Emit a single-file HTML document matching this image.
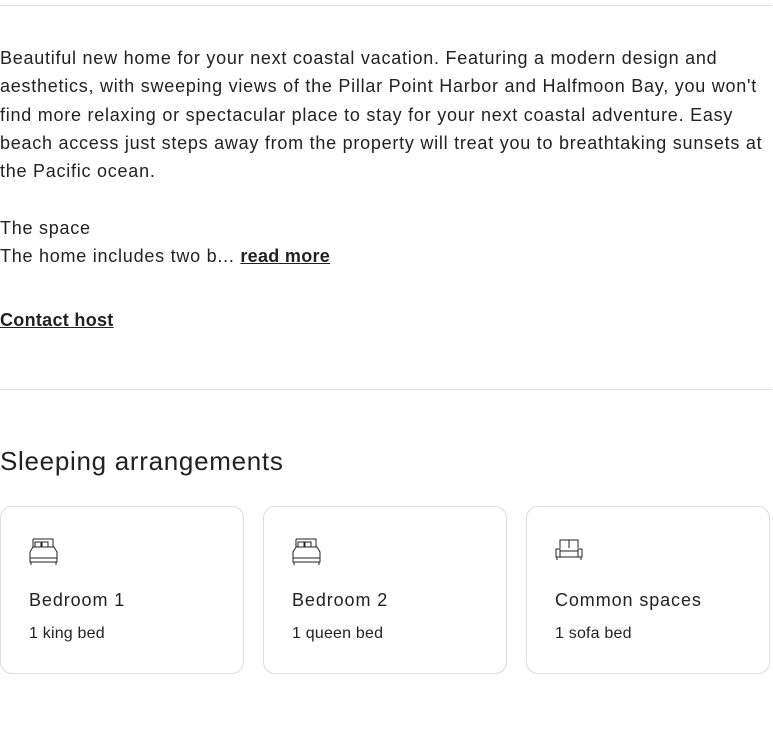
<!DOCTYPE html><html><head><style>
body{margin:0;width:773px;height:729px;background:#fff;font-family:"Liberation Sans",sans-serif;color:#222;position:relative;overflow:hidden}
.hr{position:absolute;left:0;width:771px;height:1px;background:#ddd}
.p{position:absolute;left:0;width:775px;font-size:18px;line-height:28.3px;letter-spacing:0.75px}
a{color:#222;text-decoration:underline;font-weight:bold;letter-spacing:0.3px}
.card{position:absolute;top:506px;width:244px;height:168px;border:1px solid #ddd;border-radius:12px;box-sizing:border-box}
.card svg{position:absolute;left:28px;top:30px}
.t{position:absolute;left:28px;top:83px;font-size:18px;letter-spacing:0.9px}
.s{position:absolute;left:28px;top:118px;font-size:16px;letter-spacing:0.2px}
</style></head><body>
<div class="hr" style="top:5px"></div>
<div class="p" style="top:44px">Beautiful new home for your next coastal vacation. Featuring a modern design and aesthetics, with sweeping views of the Pillar Point Harbor and Halfmoon Bay, you won't find more relaxing or spectacular place to stay for your next coastal adventure. Easy beach access just steps away from the property will treat you to breathtaking sunsets at the Pacific ocean.</div>
<div class="p" style="top:214px">The space<br>The home includes two b... <a>read more</a></div>
<div class="p" style="top:306px"><a>Contact host</a></div>
<div class="hr" style="top:389px"></div>
<div style="position:absolute;left:0;top:446px;font-size:26px;letter-spacing:0.7px">Sleeping arrangements</div>
<div class="card" style="left:0"><svg width="30" height="30" viewBox="0 0 30 30" fill="none" stroke="#222" stroke-width="1"><path d="M4 2h20v8"/><path d="M4 2v8"/><rect x="6" y="5" width="6" height="5"/><rect x="13" y="5" width="6" height="5"/><path d="M4 10L1 15v10h27V15l-3-5z M1 21h27 M2 25v3 M27 25v3"/></svg><div class="t">Bedroom 1</div><div class="s">1 king bed</div></div>
<div class="card" style="left:263px"><svg width="30" height="30" viewBox="0 0 30 30" fill="none" stroke="#222" stroke-width="1"><path d="M4 2h20v8"/><path d="M4 2v8"/><rect x="6" y="5" width="6" height="5"/><rect x="13" y="5" width="6" height="5"/><path d="M4 10L1 15v10h27V15l-3-5z M1 21h27 M2 25v3 M27 25v3"/></svg><div class="t">Bedroom 2</div><div class="s">1 queen bed</div></div>
<div class="card" style="left:526px"><svg width="30" height="30" viewBox="0 0 30 30" fill="none" stroke="#222" stroke-width="1"><path d="M5 11V3h18v8 M14 3v8 M1 12h4v8H1z M23 12h4v8h-4z M5 14h18 M1 20h26 M2 20v3 M26 20v3"/></svg><div class="t">Common spaces</div><div class="s">1 sofa bed</div></div>
</body></html>
